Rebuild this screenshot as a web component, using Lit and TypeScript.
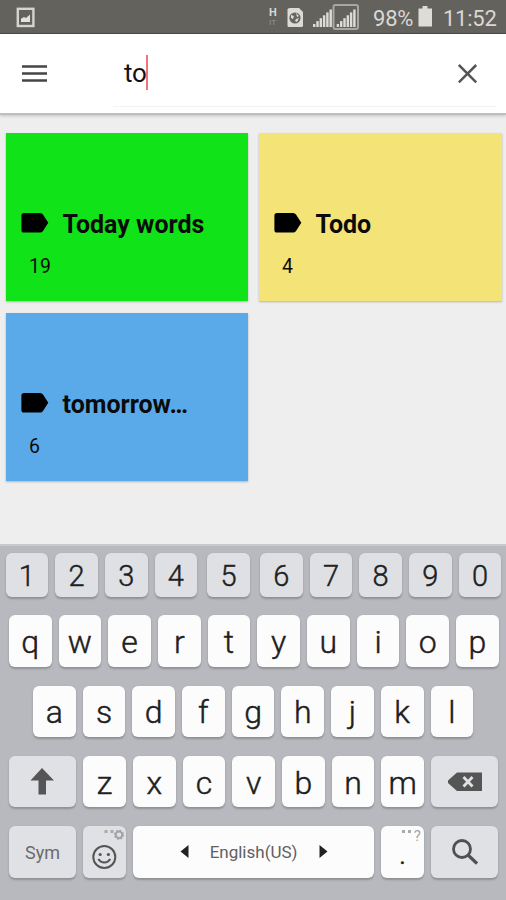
import { LitElement, html, css, svg } from "lit";
import { customElement, property } from "lit/decorators.js";

@customElement("status-bar")
class StatusBar extends LitElement {
  static styles = css`
    :host { display: flex; height: 34px; box-sizing: border-box; background: #63625d; border-bottom: 1px solid #4b4a47;
      color: #d9d8d5; font-size: 22px; line-height: 37px; padding-right: 10px; justify-content: space-between; }
    svg { display: block; flex: none; }
    .right { display: flex; }
    .pct { width: 42px; letter-spacing: -0.2px; }
    .time { width: 53px; margin-left: 8px; letter-spacing: -0.25px; }
    .net { display: flex; flex-direction: column; width: 13px; font-size: 11px; font-weight: 700; line-height: 10px; padding-top: 8px; }
    .net .dim { color: #8b8a86; font-size: 8px; font-weight: 500; line-height: 10px; }
  `;
  render() {
    const bars = (x: number, y: number) => [0, 1, 2, 3, 4, 5].map((i) =>
      svg`<rect x=${x + i * 3.3} y=${y + 15 - i * 2.9} width="2.4" height=${3 + i * 2.9} fill="#dddcd9"/>`);
    return html`
      <svg width="40" height="33" viewBox="0 0 40 33">
        <rect x="17.8" y="8.8" width="15.6" height="17.2" fill="none" stroke="#d5d4d1" stroke-width="2.4"/>
        <path d="M21 22v-3.2l3-1.8 2 1 4-3.4V22z" fill="#e3e2df"/>
      </svg>
      <div class="right">
        <div class="net"><span>H</span><span class="dim">IT</span></div>
        <svg width="91" height="33" viewBox="282 0 91 33">
          <path d="M290 8h9l4 4v13.500q0 1.500-1.500 1.500H289q-1.500 0-1.500-1.500V9.500Q287.500 8 290 8z" fill="#dcdbd8"/>
          <circle cx="295" cy="18" r="5.600" fill="#676661"/>
          <path d="M291 15l3 1-1 3-2-1zM296 13l3 3-2 1zM296 19l3-1-2 4-2-1z" fill="#dcdbd8"/>
          ${bars(313, 9)}
          <rect x="333.500" y="5" width="24.500" height="24" rx="2" fill="#63625d" stroke="#a8a7a4" stroke-width="2"/>
          ${bars(336.700, 9)}
        </svg>
        <span class="pct">98%</span>
        <svg width="20" height="33" viewBox="415 0 20 33"><path d="M422.500 6h5v2.500h4.500V26.500H418.500V8.500h4z" fill="#dddcd9"/></svg>
        <span class="time">11:52</span>
      </div>`;
  }
}

@customElement("search-bar")
class SearchBar extends LitElement {
  static styles = css`
    :host { display: flex; height: 79px; background: #fff; border-bottom: 2px solid #bebebe; box-shadow: 0 1px 3px #0000002e; z-index: 1; box-sizing: content-box; }
    svg { display: block; flex: none; }
    .field { display: flex; flex: 1; align-items: center; height: 73px; border-bottom: 1px solid #f3f3f3; margin: 0 10px 0 42px; padding-left: 11px; box-sizing: border-box; }
    .query { font-size: 26px; line-height: 36px; color: #111; padding-top: 6px; letter-spacing: -0.2px; }
    .caret { width: 2px; height: 35px; background: #f2747b; margin: 4px auto 0 -0.500px; }
  `;
  render() {
    return html`
      <svg width="71" height="79" viewBox="0 0 71 79"><path d="M22 32.500h25M22 39.500h25M22 46.500h25" stroke="#454545" stroke-width="2.300"/></svg>
      <div class="field">
        <span class="query">to</span><span class="caret"></span>
        <svg width="38" height="73" viewBox="458 0 38 73"><path d="M458.800 31l17.400 17.400M476.200 31l-17.400 17.400" stroke="#555" stroke-width="2.500"/></svg>
      </div>`;
  }
}

@customElement("label-card")
class LabelCard extends LitElement {
  @property() name = "";
  @property() count = "";
  @property() tone = "";
  static styles = css`
    :host { display: block; }
    .card { height: 168px; box-sizing: border-box; padding: 76px 0 0 15px; box-shadow: 0 1px 2px #00000040; color: #0b0b0b; }
    .green { background: #10e418; }
    .yellow { background: #f4e377; }
    .blue { background: #5aaae9; }
    .head { display: flex; height: 30px; align-items: center; }
    .head svg { flex: none; margin: 0 13.500px 2px 0; }
    .name { font-size: 25px; font-weight: 700; line-height: 30px; padding-top: 2px; }
    .count { font-size: 19.500px; line-height: 24px; padding: 16px 0 0 8px; }
  `;
  render() {
    return html`<div class="card ${this.tone}">
      <div class="head">
        <svg width="28" height="20" viewBox="0 0 28 20"><path d="M3 0H19Q21 0 22 1.600L27.300 9.800L22 18Q21 19.600 19 19.600H3Q.4 19.600 .4 17V2.600Q.4 0 3 0z" fill="#000"/></svg>
        <span class="name">${this.name}</span>
      </div>
      <div class="count">${this.count}</div>
    </div>`;
  }
}

@customElement("soft-keyboard")
class SoftKeyboard extends LitElement {
  static styles = css`
    :host { display: flex; flex-direction: column; height: 356px; box-sizing: border-box; background: #b8b9be; border-top: 2px solid #c9c9cc; padding-top: 7px; color: #202020; }
    .row { display: flex; flex: none; gap: 7px; height: 51.300px; padding-left: 8.900px; margin-bottom: 19.050px; }
    .digits { height: 43.500px; padding-left: 5.500px; margin-bottom: 18.800px; }
    .home { padding-left: 33px; }
    .key { display: flex; width: 42.700px; flex: none; align-items: center; justify-content: center; background: #fcfcfd; border-radius: 6px; box-shadow: 0 1.500px 2px #00000038;
      font-size: 32px; font-weight: 300; line-height: 40px; position: relative; box-sizing: border-box; -webkit-text-stroke: 0.45px #202020; }
    .letter { padding-top: 2px; }
    .grey { background: #e0e1e4; }
    .digit { background: #dfe0e3; font-size: 29px; padding-top: 3px; }
    .spaced { margin-left: 3px; }
    .wide { width: 67.300px; }
    .space { width: 241.400px; gap: 21px; font-size: 17px; font-weight: 400; color: #606060; -webkit-text-stroke: 0; }
    .sym { font-size: 18px; font-weight: 400; color: #6b6b6d; padding-top: 2px; -webkit-text-stroke: 0; }
    .hint { position: absolute; top: 2px; right: 3px; font-size: 15px; font-weight: 400; line-height: 16px; color: #a5a5a5; display: flex; -webkit-text-stroke: 0; }
    svg { display: block; flex: none; }
  `;
  letters(s: string) {
    return [...s].map((c) => html`<div class="key letter">${c}</div>`);
  }
  render() {
    return html`
      <div class="row digits">${[..."1234567890"].map((c) => html`<div class="key digit ${c === "5" || c === "6" ? "spaced" : ""}">${c}</div>`)}</div>
      <div class="row">${this.letters("qwertyuiop")}</div>
      <div class="row home">${this.letters("asdfghjkl")}</div>
      <div class="row">
        <div class="key grey wide"><svg width="26" height="28" viewBox="0 0 26 28"><path d="M12 0L24 12.500H16V26.500H8.500V12.500H.5z" fill="#555"/></svg></div>
        ${this.letters("zxcvbnm")}
        <div class="key grey wide"><svg width="34" height="20" viewBox="0 0 34 20"><path d="M9 .5H34V19H9L0 11V8.500z" fill="#555"/><path d="M15.500 5l9 9.500M24.500 5l-9 9.500" stroke="#e0e1e4" stroke-width="2.800"/></svg></div>
      </div>
      <div class="row">
        <div class="key grey wide sym">Sym</div>
        <div class="key grey">
          <svg width="43" height="51" viewBox="0 0 43 51">
            <circle cx="21.300" cy="31" r="11" fill="none" stroke="#555" stroke-width="2"/>
            <circle cx="17.200" cy="28.500" r="1.600" fill="#555"/><circle cx="25.400" cy="28.500" r="1.600" fill="#555"/>
            <path d="M15.300 33q2.300 3.500 6 3.500t6-3.500" fill="none" stroke="#555" stroke-width="2"/>
            <path d="M21.500 5.500h3M27.500 5.500h3" stroke="#aaa" stroke-width="3"/>
            <circle cx="36" cy="8.800" r="3.300" fill="none" stroke="#a2a2a4" stroke-width="2"/>
            <circle cx="36" cy="8.800" r="4.500" fill="none" stroke="#a2a2a4" stroke-width="1.200" stroke-dasharray="1.800 1.730"/>
          </svg>
        </div>
        <div class="key space">
          <svg width="9" height="13" viewBox="0 0 9 13"><path d="M8.500 0V13L.5 6.500z" fill="#222"/></svg>
          <span>English(US)</span>
          <svg width="9" height="13" viewBox="0 0 9 13"><path d="M.5 0V13L8.500 6.500z" fill="#222"/></svg>
        </div>
        <div class="key letter">.
          <span class="hint"><svg width="12" height="8" viewBox="0 0 12 8"><path d="M0 3.500h3M6 3.500h3" stroke="#aaa" stroke-width="3"/></svg>?</span>
        </div>
        <div class="key grey wide"><svg width="26" height="26" viewBox="0 0 26 26"><circle cx="10" cy="10" r="8.500" fill="none" stroke="#505050" stroke-width="2.800"/><path d="M16 16l9 8.500" stroke="#505050" stroke-width="3.200"/></svg></div>
      </div>`;
  }
}

@customElement("app-root")
class AppRoot extends LitElement {
  static styles = css`
    :host { display: flex; flex-direction: column; width: 506px; height: 900px; overflow: hidden; background: #eee; font-family: Roboto, "Liberation Sans", sans-serif; }
    .grid { display: grid; grid-template-columns: 242px 243px; gap: 12px 11px; padding: 18px 0 0 6px; flex: 1; align-content: start; }
  `;
  render() {
    return html`
      <status-bar></status-bar>
      <search-bar></search-bar>
      <div class="grid">
        <label-card name="Today words" count="19" tone="green"></label-card>
        <label-card name="Todo" count="4" tone="yellow"></label-card>
        <label-card name="tomorrow…" count="6" tone="blue"></label-card>
      </div>
      <soft-keyboard></soft-keyboard>`;
  }
}
